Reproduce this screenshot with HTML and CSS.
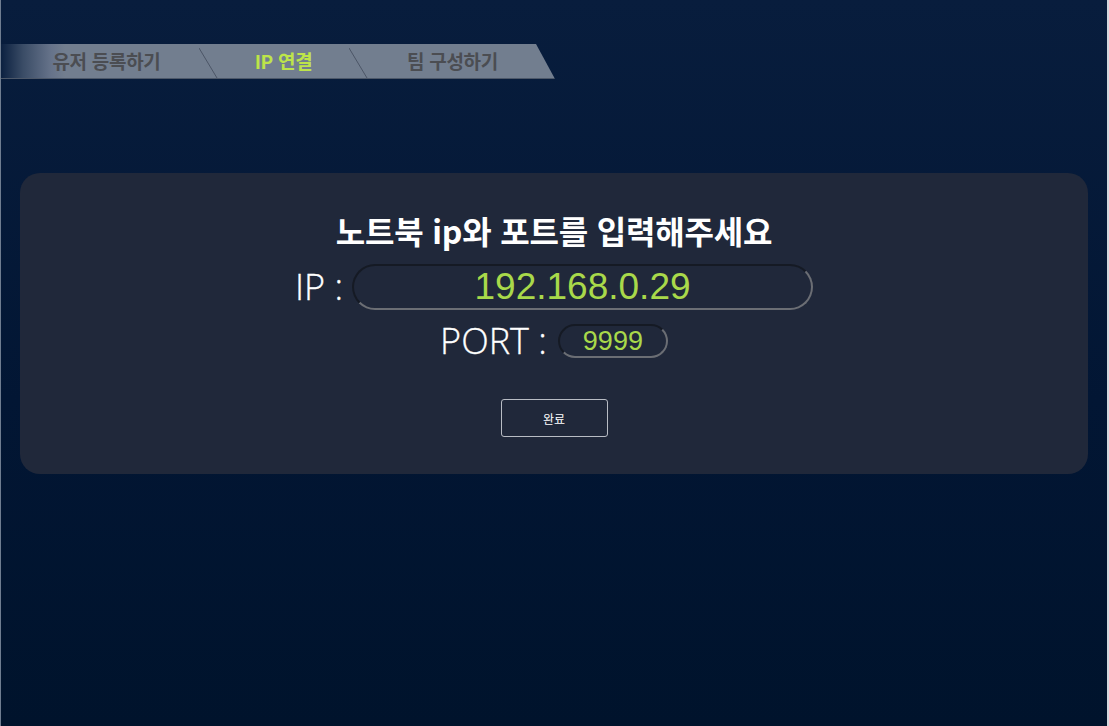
FILE: index.html
```html
<!DOCTYPE html>
<html lang="ko">
<head>
<meta charset="utf-8">
<title>IP 연결</title>
<link rel="stylesheet" href="styles.css">
</head>
<body>
<div class="page">
  <nav class="steps">
    <div class="step step-first">유저 등록하기</div>
    <svg class="sep" width="19" height="35" viewBox="0 0 19 35"><line x1="0" y1="4" x2="18" y2="34" stroke="#4b5666" stroke-width="1"/></svg>
    <div class="step step-mid active">IP 연결</div>
    <svg class="sep" width="19" height="35" viewBox="0 0 19 35"><line x1="0" y1="4" x2="18" y2="34" stroke="#4b5666" stroke-width="1"/></svg>
    <div class="step step-last">팀 구성하기</div>
  </nav>

  <section class="card">
    <h1 class="title">노트북 ip와 포트를 입력해주세요</h1>
    <div class="row">
      <label class="label" for="ip">IP :</label>
      <input id="ip" class="field field-ip" type="text" value="192.168.0.29">
    </div>
    <div class="row row-port">
      <label class="label" for="port">PORT :</label>
      <input id="port" class="field field-port" type="text" value="9999">
    </div>
    <button class="done" type="button">완료</button>
  </section>
</div>
</body>
</html>
```

FILE: styles.css
```css
* { box-sizing: border-box; }

html, body {
  margin: 0;
  padding: 0;
  height: 100%;
}

body {
  background: #0a1e3c;
}

.page {
  height: 726px;
  overflow: hidden;
  border-left: 1px solid #6f7d90;
  border-right: 2px solid #d4d8de;
  background: linear-gradient(to bottom, #081d3d 0%, #021634 55%, #00132c 100%);
  padding-top: 44px;
  font-family: "Noto Sans CJK KR", "Noto Sans", sans-serif;
}

.steps {
  display: flex;
  align-items: stretch;
  width: 554px;
  height: 35px;
  background: linear-gradient(to right, #0b2040 0px, #3a4c66 22px, #66738a 50px, #727e8f 64px, #727e8f 100%);
  clip-path: polygon(0 0, 535px 0, 554px 100%, 0 100%);
  border-bottom: 1px solid #4d5869;
}

.step {
  font-size: 19px;
  font-weight: 700;
  color: #4b4d52;
  line-height: 34px;
  text-align: center;
  letter-spacing: -0.3px;
}

.step-first { width: 198px; padding-left: 13px; }
.step-mid { width: 131px; }
.step-last { width: 169px; }

.step.active { color: #bde44a; }

.sep { flex: none; display: block; }

.card {
  margin: 94px 19px 0 19px;
  height: 301px;
  border-radius: 20px;
  background: #20283a;
  padding-top: 39px;
  display: flex;
  flex-direction: column;
  align-items: center;
}

.title {
  margin: 0;
  font-size: 32px;
  line-height: 36px;
  font-weight: 700;
  color: #ffffff;
  letter-spacing: -0.2px;
}

.row {
  display: flex;
  align-items: center;
  gap: 9px;
  margin-top: 16px;
  height: 46px;
}

.row-port {
  margin-top: 14px;
  height: 34px;
  gap: 11px;
}

.label {
  font-family: "Open Sans", "Noto Sans", sans-serif;
  font-weight: 300;
  font-size: 36px;
  line-height: 1;
  color: #ffffff;
  -webkit-text-stroke: 0.3px #ffffff;
}

.field {
  background: transparent;
  border-style: solid;
  border-width: 2px;
  border-color: #151a24 #6b6e74 #6b6e74 #151a24;
  border-radius: 999px;
  color: #a9d94a;
  font-family: "Liberation Sans", Arial, sans-serif;
  text-align: center;
  padding: 0 10px;
  outline: none;
}

.field-ip {
  width: 461px;
  height: 46px;
  font-size: 37px;
}

.field-port {
  width: 110px;
  height: 34px;
  font-size: 27px;
}

.done {
  margin-top: 41px;
  width: 107px;
  height: 38px;
  background: transparent;
  border: 1px solid #b8bcc4;
  border-radius: 3px;
  color: #ffffff;
  font-family: "Noto Sans CJK KR", sans-serif;
  font-size: 12px;
  cursor: pointer;
}
```
